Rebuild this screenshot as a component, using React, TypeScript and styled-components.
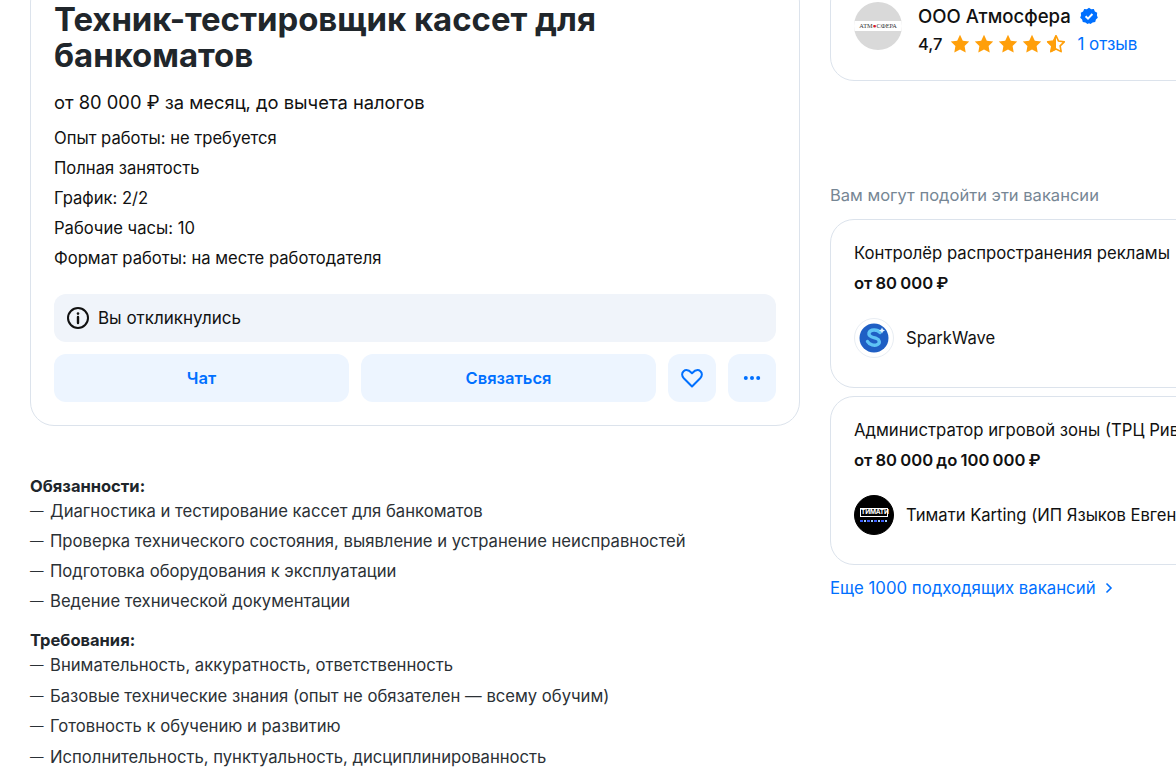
import React from "react";
import styled, { createGlobalStyle } from "styled-components";

const GlobalStyle = createGlobalStyle`
  html, body {
    margin: 0;
    height: 100%;
    overflow: hidden;
    background: #fff;
  }
  body {
    font-family: Inter, "Noto Sans", sans-serif;
    color: #111;
  }
`;

const Page = styled.div`
  display: flex;
  gap: 30px;
  width: 1200px;
  padding-left: 30px;
  margin-top: -22px;
`;

const LeftColumn = styled.div`
  flex: 0 0 770px;
`;

const RightColumn = styled.div`
  flex: 0 0 370px;
  display: flex;
  flex-direction: column;
`;

const Card = styled.div`
  box-sizing: border-box;
  border: 1px solid #dce3ec;
  border-radius: 24px;
  background: #fff;
  padding: 23px;
`;

const MainCard = styled(Card)`
  height: 448px;
`;

const Title = styled.h1`
  margin: -1px 0 0;
  font-size: 32.9px;
  line-height: 36px;
  font-weight: 700;
  color: #20262b;
`;

const Salary = styled.div`
  margin-top: 17px;
  font-size: 18.35px;
  line-height: 24px;
`;

const FactList = styled.div`
  margin-top: 14px;
  display: flex;
  flex-direction: column;
  gap: 10px;
`;

const Fact = styled.div`
  font-size: 16.6px;
  line-height: 20px;
`;

const Banner = styled.div`
  box-sizing: border-box;
  display: flex;
  align-items: center;
  gap: 8px;
  height: 48px;
  margin-top: 26px;
  padding: 0 12px 1px;
  border-radius: 12px;
  background: #f0f4fa;
  font-size: 17px;
`;

const Actions = styled.div`
  display: flex;
  gap: 12px;
  margin-top: 12px;
`;

const ActionButton = styled.button<{ $square?: boolean }>`
  display: flex;
  align-items: center;
  justify-content: center;
  flex: ${(p) => (p.$square ? "0 0 48px" : "1 1 0")};
  height: 48px;
  padding: 0 0 ${(p) => (p.$square ? "0" : "1px")};
  border: none;
  border-radius: 12px;
  background: #edf5ff;
  color: #0070ff;
  font-family: inherit;
  font-size: 16.5px;
  font-weight: 600;
`;

const Description = styled.div`
  margin-top: 50px;
`;

const SectionTitle = styled.div`
  font-size: 16.5px;
  line-height: 20px;
  font-weight: 700;
  color: #20262b;
  margin-top: 19.1px;
  &:first-child {
    margin-top: 0;
  }
`;

const BulletList = styled.ul<{ $gap: number }>`
  list-style: none;
  margin: 5.2px 0 0;
  padding: 0;
  display: flex;
  flex-direction: column;
  gap: ${(p) => p.$gap}px;
`;

const Bullet = styled.li`
  display: flex;
  font-size: 16.65px;
  line-height: 20px;
  color: #2b3136;
  &::before {
    content: "—";
    width: 20px;
    flex: none;
    font-size: 13.5px;
  }
`;

const EmployerCard = styled(Card)`
  padding-bottom: 25px;
`;

const Employer = styled.div`
  display: flex;
  gap: 16px;
`;

const EmployerLogo = styled.div`
  flex: none;
  width: 48px;
  height: 48px;
  border-radius: 50%;
  background: #d9d9d9;
  display: flex;
  align-items: center;
  justify-content: center;
  overflow: hidden;
`;

const LogoBand = styled.div`
  width: 100%;
  height: 10px;
  background: #fff;
  color: #333;
  font-family: "Liberation Serif", serif;
  font-size: 6.3px;
  line-height: 10px;
  text-align: center;
  white-space: nowrap;
  b {
    color: #d3202a;
  }
`;

const EmployerInfo = styled.div`
  display: flex;
  flex-direction: column;
  gap: 5px;
  padding-top: 2px;
`;

const EmployerName = styled.div`
  display: flex;
  align-items: center;
  gap: 9px;
  font-size: 18.6px;
  line-height: 24px;
  font-weight: 500;
`;

const RatingRow = styled.div`
  display: flex;
  align-items: center;
  font-size: 16.5px;
  line-height: 22px;
`;

const RatingValue = styled.span`
  font-weight: 500;
  margin-right: 8px;
`;

const Stars = styled.div`
  display: flex;
  gap: 4px;
  margin-right: 11px;
`;

const ReviewLink = styled.span`
  color: #0070ff;
  font-size: 17px;
`;

const SideHeading = styled.div`
  margin-top: 104px;
  margin-bottom: 14px;
  font-size: 16.55px;
  line-height: 20px;
  color: #768694;
`;

const VacancyCard = styled(Card)`
  height: 169px;
  margin-bottom: 8px;
  white-space: nowrap;
  overflow: hidden;
`;

const VacancyTitle = styled.div`
  font-size: 16.7px;
  line-height: 20px;
`;

const VacancySalary = styled.div`
  margin-top: 10px;
  font-size: 16.6px;
  line-height: 20px;
  font-weight: 600;
  word-spacing: -1px;
`;

const Company = styled.div`
  display: flex;
  align-items: center;
  gap: 12px;
  margin-top: 25px;
  font-size: 16.6px;
`;

const CompanyLogo = styled.div<{ $dark?: boolean }>`
  flex: none;
  box-sizing: border-box;
  width: 40px;
  height: 40px;
  border-radius: 50%;
  border: 1px solid ${(p) => (p.$dark ? "#000" : "#e8edf3")};
  background: ${(p) => (p.$dark ? "#000" : "#fff")};
  display: flex;
  flex-direction: column;
  align-items: center;
  justify-content: center;
`;

const TimatiMark = styled.div`
  box-sizing: border-box;
  width: 28px;
  height: 9px;
  border: 1px solid #fff;
  color: #fff;
  font-size: 6.5px;
  line-height: 7px;
  font-weight: 700;
  text-align: center;
  letter-spacing: -0.2px;
`;

const TimatiStrip = styled.div`
  width: 28px;
  height: 2px;
  margin-top: 3px;
  background: repeating-linear-gradient(90deg, #3a5bff 0 3px, #000 3px 4px, #9fd0ff 4px 6px, #000 6px 7px);
`;

const MoreLink = styled.div`
  display: flex;
  align-items: center;
  gap: 8px;
  margin-top: 5px;
  font-size: 16.8px;
  line-height: 20px;
  color: #0070ff;
`;

const STAR =
  "M10 .8l2.8 5.900 6.400.9-4.600 4.500 1.100 6.400L10 15.500l-5.700 3 1.100-6.400L.8 7.600l6.400-.9z";

const Star: React.FC<{ half?: boolean }> = ({ half }) => (
  <svg width="20" height="20" viewBox="0 0 20 20">
    {half ? (
      <>
        <path d={STAR} fill="none" stroke="#ff9f0a" strokeWidth="1.800" strokeLinejoin="round" transform="translate(1 1) scale(.9)" />
        <path d="M10 .8v14.700l-5.700 3 1.100-6.400L.8 7.600l6.400-.9z" fill="#ff9f0a" />
      </>
    ) : (
      <path d={STAR} fill="#ff9f0a" />
    )}
  </svg>
);

const VerifiedIcon = () => (
  <svg width="18" height="18" viewBox="0 0 18 18">
    <path
      d="M9 .8l2.200 1.400 2.600-.1 1.100 2.300 2.300 1.300-.3 2.600.9 2.400-1.900 1.800-.7 2.500-2.600.4L10.500 17 9 16.200 7.500 17l-2.100-1.600-2.600-.4-.7-2.500L.2 10.700l.9-2.400-.3-2.600 2.300-1.300 1.100-2.300 2.600.1z"
      fill="#0070ff"
    />
    <path d="M5.600 9.200l2.400 2.400 4.400-4.600" fill="none" stroke="#fff" strokeWidth="2" />
  </svg>
);

const InfoIcon = () => (
  <svg width="24" height="24" viewBox="0 0 24 24" fill="none" stroke="#111" strokeWidth="2">
    <circle cx="12" cy="12" r="10" />
    <path d="M12 11v6" strokeLinecap="round" strokeWidth="2.400" />
    <circle cx="12" cy="7.600" r="1.300" fill="#111" stroke="none" />
  </svg>
);

const HeartIcon = () => (
  <svg width="24" height="24" viewBox="0 0 24 24" fill="none" stroke="#0070ff" strokeWidth="2" strokeLinejoin="round">
    <path d="M12 20.500l-8.200-8.200C1.600 10 1.600 7 3.600 5.200 5.700 3.400 8.700 3.800 12 7.200c3.300-3.400 6.300-3.800 8.400-2 2 1.800 2 4.800-.2 7.100z" />
  </svg>
);

const DotsIcon = () => (
  <svg width="20" height="20" viewBox="0 0 20 20" fill="#0070ff">
    <circle cx="3.800" cy="10" r="2" />
    <circle cx="10" cy="10" r="2" />
    <circle cx="16.200" cy="10" r="2" />
  </svg>
);

const ChevronIcon = () => (
  <svg width="10" height="12" viewBox="0 0 10 12" fill="none" stroke="#0070ff" strokeWidth="1.600">
    <path d="M2.500 1.500L7 6l-4.500 4.500" />
  </svg>
);

const SparkLogo = () => (
  <svg width="30" height="30" viewBox="0 0 30 30">
    <circle cx="15" cy="15" r="14.500" fill="#1f5fc4" />
    <path
      d="M21 9.500c-2.500-3.500-10-3.500-11 .5s4.500 4.500 7.500 5.500 4 4.500 1 6-8 .5-10-3"
      fill="none"
      stroke="#5fc3f5"
      strokeWidth="3.400"
      strokeLinecap="round"
    />
    <path d="M23 4.500l1 2 2 1-2 1-1 2-1-2-2-1 2-1z" fill="#dff3ff" />
  </svg>
);

const facts = [
  "Опыт работы: не требуется",
  "Полная занятость",
  "График: 2/2",
  "Рабочие часы: 10",
  "Формат работы: на месте работодателя",
];

const duties = [
  "Диагностика и тестирование кассет для банкоматов",
  "Проверка технического состояния, выявление и устранение неисправностей",
  "Подготовка оборудования к эксплуатации",
  "Ведение технической документации",
];

const requirements = [
  "Внимательность, аккуратность, ответственность",
  "Базовые технические знания (опыт не обязателен — всему обучим)",
  "Готовность к обучению и развитию",
  "Исполнительность, пунктуальность, дисциплинированность",
];

const App: React.FC = () => (
  <>
    <GlobalStyle />
    <Page>
      <LeftColumn>
        <MainCard>
          <Title>
            Техник-тестировщик кассет для
            <br />
            банкоматов
          </Title>
          <Salary>от 80 000 ₽ за месяц, до вычета налогов</Salary>
          <FactList>
            {facts.map((fact) => (
              <Fact key={fact}>{fact}</Fact>
            ))}
          </FactList>
          <Banner>
            <InfoIcon />
            Вы откликнулись
          </Banner>
          <Actions>
            <ActionButton>Чат</ActionButton>
            <ActionButton>Связаться</ActionButton>
            <ActionButton $square>
              <HeartIcon />
            </ActionButton>
            <ActionButton $square>
              <DotsIcon />
            </ActionButton>
          </Actions>
        </MainCard>
        <Description>
          <SectionTitle>Обязанности:</SectionTitle>
          <BulletList $gap={10}>
            {duties.map((item) => (
              <Bullet key={item}>{item}</Bullet>
            ))}
          </BulletList>
          <SectionTitle>Требования:</SectionTitle>
          <BulletList $gap={10.4}>
            {requirements.map((item) => (
              <Bullet key={item}>{item}</Bullet>
            ))}
          </BulletList>
        </Description>
      </LeftColumn>
      <RightColumn>
        <EmployerCard>
          <Employer>
            <EmployerLogo>
              <LogoBand>
                АТМ<b>●</b>СФЕРА
              </LogoBand>
            </EmployerLogo>
            <EmployerInfo>
              <EmployerName>
                ООО Атмосфера
                <VerifiedIcon />
              </EmployerName>
              <RatingRow>
                <RatingValue>4,7</RatingValue>
                <Stars>
                  <Star />
                  <Star />
                  <Star />
                  <Star />
                  <Star half />
                </Stars>
                <ReviewLink>1 отзыв</ReviewLink>
              </RatingRow>
            </EmployerInfo>
          </Employer>
        </EmployerCard>
        <SideHeading>Вам могут подойти эти вакансии</SideHeading>
        <VacancyCard>
          <VacancyTitle>Контролёр распространения рекламы</VacancyTitle>
          <VacancySalary>от 80 000 ₽</VacancySalary>
          <Company>
            <CompanyLogo>
              <SparkLogo />
            </CompanyLogo>
            SparkWave
          </Company>
        </VacancyCard>
        <VacancyCard>
          <VacancyTitle>Администратор игровой зоны (ТРЦ Ривьера)</VacancyTitle>
          <VacancySalary>от 80 000 до 100 000 ₽</VacancySalary>
          <Company>
            <CompanyLogo $dark>
              <TimatiMark>ТИМАТИ</TimatiMark>
              <TimatiStrip />
            </CompanyLogo>
            Тимати Karting (ИП Языков Евгений)
          </Company>
        </VacancyCard>
        <MoreLink>
          Еще 1000 подходящих вакансий
          <ChevronIcon />
        </MoreLink>
      </RightColumn>
    </Page>
  </>
);

export default App;
